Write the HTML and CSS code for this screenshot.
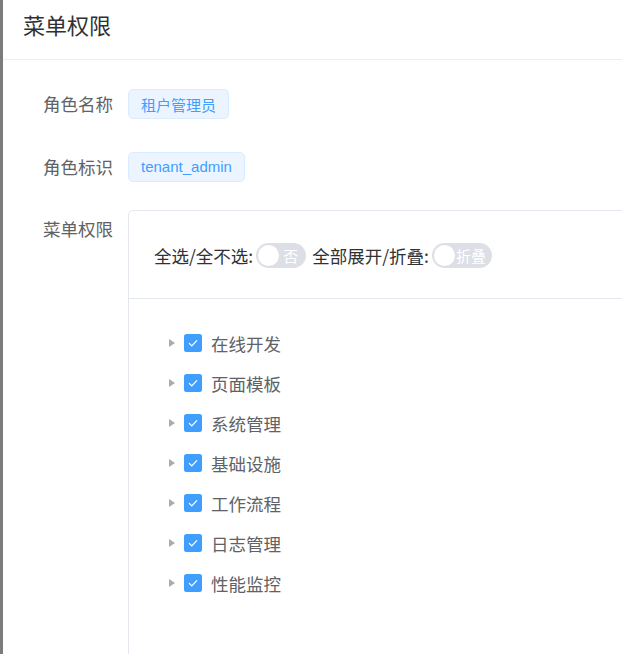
FILE: index.html
```html
<!DOCTYPE html>
<html lang="zh">
<head>
<meta charset="utf-8">
<link rel="stylesheet" href="styles.css">
</head>
<body>
<div class="edge"></div>
<div class="dialog">
  <div class="dialog-header"><span class="title">菜单权限</span></div>
  <div class="dialog-body">
    <div class="form-item">
      <div class="label">角色名称</div>
      <div class="content"><span class="tag">租户管理员</span></div>
    </div>
    <div class="form-item">
      <div class="label">角色标识</div>
      <div class="content"><span class="tag">tenant_admin</span></div>
    </div>
    <div class="form-item">
      <div class="label">菜单权限</div>
      <div class="content">
        <div class="card">
          <div class="card-header">
            <span class="ctl-label">全选/全不选:</span>
            <span class="switch"><span class="knob"></span><span class="sw-text">否</span></span>
            <span class="ctl-label">全部展开/折叠:</span>
            <span class="switch wide"><span class="knob"></span><span class="sw-text">折叠</span></span>
          </div>
          <div class="card-body">
            <div class="node"><span class="caret"></span><span class="cb"><svg viewBox="0 0 18 18" width="18" height="18"><path d="M5 9.2 L7.8 12 L13 6.3" fill="none" stroke="#fff" stroke-width="1.2"/></svg></span><span class="node-label">在线开发</span></div>
            <div class="node"><span class="caret"></span><span class="cb"><svg viewBox="0 0 18 18" width="18" height="18"><path d="M5 9.2 L7.8 12 L13 6.3" fill="none" stroke="#fff" stroke-width="1.2"/></svg></span><span class="node-label">页面模板</span></div>
            <div class="node"><span class="caret"></span><span class="cb"><svg viewBox="0 0 18 18" width="18" height="18"><path d="M5 9.2 L7.8 12 L13 6.3" fill="none" stroke="#fff" stroke-width="1.2"/></svg></span><span class="node-label">系统管理</span></div>
            <div class="node"><span class="caret"></span><span class="cb"><svg viewBox="0 0 18 18" width="18" height="18"><path d="M5 9.2 L7.8 12 L13 6.3" fill="none" stroke="#fff" stroke-width="1.2"/></svg></span><span class="node-label">基础设施</span></div>
            <div class="node"><span class="caret"></span><span class="cb"><svg viewBox="0 0 18 18" width="18" height="18"><path d="M5 9.2 L7.8 12 L13 6.3" fill="none" stroke="#fff" stroke-width="1.2"/></svg></span><span class="node-label">工作流程</span></div>
            <div class="node"><span class="caret"></span><span class="cb"><svg viewBox="0 0 18 18" width="18" height="18"><path d="M5 9.2 L7.8 12 L13 6.3" fill="none" stroke="#fff" stroke-width="1.2"/></svg></span><span class="node-label">日志管理</span></div>
            <div class="node"><span class="caret"></span><span class="cb"><svg viewBox="0 0 18 18" width="18" height="18"><path d="M5 9.2 L7.8 12 L13 6.3" fill="none" stroke="#fff" stroke-width="1.2"/></svg></span><span class="node-label">性能监控</span></div>
          </div>
        </div>
      </div>
    </div>
  </div>
</div>
</body>
</html>
```
FILE: styles.css
```css
html, body {
  margin: 0;
  padding: 0;
  height: 100%;
  overflow: hidden;
  background: #fff;
}
body {
  display: flex;
  font-family: "Noto Sans CJK SC", "Noto Sans", sans-serif;
}
.edge {
  width: 3px;
  flex: none;
  background: #7b7b7b;
}
.dialog {
  flex: 1;
  min-width: 0;
  background: #fff;
}
.dialog-header {
  height: 60px;
  box-sizing: border-box;
  border-bottom: 1px solid #ebeef5;
  padding-left: 20px;
  display: flex;
  align-items: center;
}
.title {
  font-size: 22px;
  color: #303133;
  line-height: 1;
  margin-top: -12px;
}
.dialog-body {
  padding-top: 24px;
}
.form-item {
  display: flex;
  margin-bottom: 22.5px;
}
.label {
  width: 110px;
  flex: none;
  text-align: right;
  font-size: 17.5px;
  line-height: 40px;
  height: 40px;
  color: #606266;
}
.content {
  margin-left: 15px;
  min-height: 40px;
  display: flex;
  align-items: center;
  flex: 1;
  min-width: 0;
}
.tag {
  display: inline-flex;
  align-items: center;
  height: 30px;
  box-sizing: border-box;
  padding: 0 12px;
  font-family: "Liberation Sans", "Noto Sans CJK SC", sans-serif;
  font-size: 15px;
  color: #409eff;
  background: #ecf5ff;
  border: 1px solid #d9ecff;
  border-radius: 5px;
}
.card {
  width: 620px;
  height: 520px;
  flex: none;
  align-self: flex-start;
  margin-top: 1px;
  border: 1px solid #e4e7ed;
  border-radius: 5px;
  box-sizing: border-box;
}
.card-header {
  height: 88px;
  box-sizing: border-box;
  border-bottom: 1px solid #e4e7ed;
  padding: 2px 25px 0;
  display: flex;
  align-items: center;
}
.ctl-label {
  font-size: 17.5px;
  color: #303133;
}
.switch {
  position: relative;
  display: inline-flex;
  align-items: center;
  justify-content: flex-end;
  width: 50px;
  height: 25px;
  border-radius: 12.5px;
  background: #dcdfe6;
  margin: 0 6px 0 3px;
  box-sizing: border-box;
  padding-right: 8px;
}
.switch.wide {
  width: 60px;
  padding-right: 6px;
}
.knob {
  position: absolute;
  left: 2px;
  top: 2px;
  width: 21px;
  height: 21px;
  border-radius: 50%;
  background: #fff;
}
.sw-text {
  font-size: 15px;
  color: #fff;
  line-height: 1;
}
.card-body {
  padding: 24px 0 0 30px;
}
.node {
  display: flex;
  align-items: center;
  height: 40px;
}
.caret {
  width: 22.5px;
  height: 40px;
  flex: none;
  display: flex;
  align-items: center;
  justify-content: center;
}
.caret::before {
  content: "";
  display: block;
  width: 0;
  height: 0;
  border-top: 4.5px solid transparent;
  border-bottom: 4.5px solid transparent;
  border-left: 6px solid #a8abb2;
  margin-left: 3px;
}
.cb {
  width: 18px;
  height: 18px;
  flex: none;
  margin-left: 2.5px;
  background: #409eff;
  border-radius: 2.5px;
  display: flex;
}
.node-label {
  margin-left: 9px;
  font-size: 17.5px;
  color: #606266;
}
```
